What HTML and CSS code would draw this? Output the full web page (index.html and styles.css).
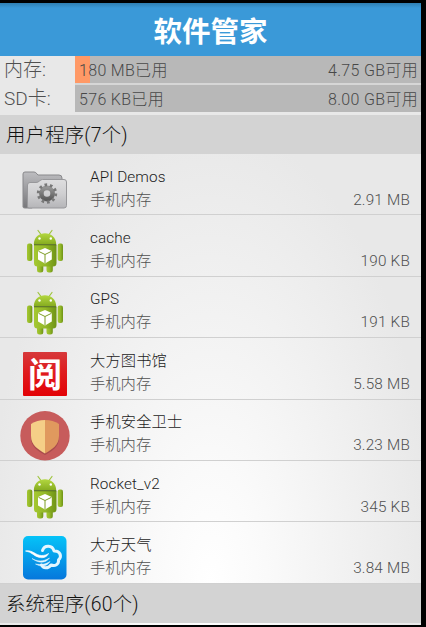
FILE: index.html
```html
<!DOCTYPE html>
<html lang="zh-CN">
<head>
<meta charset="utf-8">
<title>软件管家</title>
<link rel="stylesheet" href="styles.css">
</head>
<body>
<svg class="defs" width="0" height="0" aria-hidden="true">
  <defs>
    <linearGradient id="green" x1="0" x2="1"><stop offset="0" stop-color="#a5c832"/><stop offset=".5" stop-color="#93b828"/><stop offset="1" stop-color="#6f9316"/></linearGradient>
    <linearGradient id="head" x1="0" x2="0" y1="0" y2="1"><stop offset="0" stop-color="#b4d840"/><stop offset="1" stop-color="#86ac20"/></linearGradient>
    <symbol id="android" viewBox="0 0 50 50">
      <path d="M18 4.500l3 4M32 4.500l-3 4" stroke="#9dc43a" stroke-width="1.200" stroke-linecap="round"/>
      <path d="M13.800 18.200C14 3.500 36 3.500 36.200 18.200z" fill="url(#head)"/>
      <circle cx="19.500" cy="12.500" r="1.200" fill="#fff"/><circle cx="30.800" cy="12.500" r="1.200" fill="#fff"/>
      <rect x="7" y="17.500" width="5.300" height="17.500" rx="2" fill="url(#green)"/>
      <rect x="37.700" y="17.500" width="5.300" height="17.500" rx="2" fill="url(#green)"/>
      <rect x="17" y="35" width="6.300" height="11.500" rx="2.500" fill="url(#green)"/>
      <rect x="26.500" y="35" width="6.300" height="11.500" rx="2.500" fill="url(#green)"/>
      <path d="M14 19h22.500v18a3.500 3.500 0 0 1-3.500 3.500h-15.500a3.500 3.500 0 0 1-3.500-3.500z" fill="url(#green)"/>
      <path d="M14 18.700h22.300" stroke="#4f6b14" stroke-width="1.100"/>
      <path d="M18 25l7-3 6.800 3v8.500l-6.800 4-7-4z" fill="#fff"/>
      <path d="M18.500 25.300l6.500 3.200 6.500-3.200M25 28.500v8.500" fill="none" stroke="#7d9d25" stroke-width="1"/>
    </symbol>
  </defs>
</svg>
<main class="screen">
  <header class="title">软件管家</header>
  <section class="storage">
    <div class="label">内存:</div>
    <div class="bar memory"><span>180 MB已用</span><span>4.75 GB可用</span></div>
    <div class="label">SD卡:</div>
    <div class="bar"><span>576 KB已用</span><span>8.00 GB可用</span></div>
  </section>
  <h2 class="group">用户程序(7个)</h2>
  <ul class="apps">
    <li class="app">
      <svg class="icon" viewBox="0 0 50 50">
        <defs>
          <linearGradient id="back" x1="0" y1="0" x2="0" y2="1"><stop offset="0" stop-color="#bdbdc0"/><stop offset="1" stop-color="#77777a"/></linearGradient>
          <linearGradient id="front" x1="0" y1="0" x2="0" y2="1"><stop offset="0" stop-color="#dededf"/><stop offset=".5" stop-color="#cfcfd1"/><stop offset="1" stop-color="#b5b5b8"/></linearGradient>
          <linearGradient id="gear" x1="0" y1="0" x2="0" y2="1"><stop offset="0" stop-color="#959595"/><stop offset="1" stop-color="#5c5c5c"/></linearGradient>
        </defs>
        <path d="M3 42V9q0-2 2-2h9q2 0 3 2l1 1h21q3 0 3 3v4l-30 26H5q-2 0-2-1z" fill="url(#back)" stroke="#88888b"/>
        <path d="M7.500 41.500V20q0-2.500 2.500-2.500h6q2 0 3.500-1.500t3-1.500H44q2.500 0 2.500 2.500V40.500q0 2.500-2.500 2.500H9q-1.500 0-1.500-1.500z" fill="url(#front)" stroke="#98989b"/>
        <circle cx="27" cy="28.500" r="5.600" fill="none" stroke="url(#gear)" stroke-width="4.600"/>
        <circle cx="27" cy="28.500" r="8.700" fill="none" stroke="#787878" stroke-width="3" stroke-dasharray="2.600 2.866"/>
      </svg>
      <div class="info"><div class="name">API Demos</div><div class="meta"><span>手机内存</span><span>2.91 MB</span></div></div>
    </li>
    <li class="app">
      <svg class="icon"><use href="#android"/></svg>
      <div class="info"><div class="name">cache</div><div class="meta"><span>手机内存</span><span>190 KB</span></div></div>
    </li>
    <li class="app">
      <svg class="icon"><use href="#android"/></svg>
      <div class="info"><div class="name">GPS</div><div class="meta"><span>手机内存</span><span>191 KB</span></div></div>
    </li>
    <li class="app">
      <svg class="icon" viewBox="0 0 50 50">
        <defs><linearGradient id="red" x1="0" y1="0" x2="0" y2="1"><stop offset="0" stop-color="#d6383a"/><stop offset=".45" stop-color="#df1c1e"/><stop offset="1" stop-color="#e30206"/></linearGradient></defs>
        <rect x="3" y="3" width="44" height="44" rx="1" fill="url(#red)"/>
        <text class="glyph" x="25" y="37.500" text-anchor="middle">阅</text>
      </svg>
      <div class="info"><div class="name">大方图书馆</div><div class="meta"><span>手机内存</span><span>5.58 MB</span></div></div>
    </li>
    <li class="app">
      <svg class="icon" viewBox="0 0 50 50">
        <circle cx="25" cy="24.700" r="24.700" fill="#c75c5c"/>
        <path d="M25 11q8 0 14 4v12c0 9-7 13-14 17-7-4-14-8-14-17V15q6-4 14-4z" fill="#a94b4d"/>
        <path d="M25 9q-8 0-14 4v12c0 9 7 13.500 14 17.500z" fill="#f5cf87"/>
        <path d="M25 9q8 0 14 4v12c0 9-7 13.500-14 17.500z" fill="#e0995e"/>
      </svg>
      <div class="info"><div class="name">手机安全卫士</div><div class="meta"><span>手机内存</span><span>3.23 MB</span></div></div>
    </li>
    <li class="app">
      <svg class="icon"><use href="#android"/></svg>
      <div class="info"><div class="name">Rocket_v2</div><div class="meta"><span>手机内存</span><span>345 KB</span></div></div>
    </li>
    <li class="app">
      <svg class="icon" viewBox="0 0 50 50">
        <defs><linearGradient id="sky" x1="0" y1="0" x2="0" y2="1"><stop offset="0" stop-color="#05c3f8"/><stop offset="1" stop-color="#0677dc"/></linearGradient></defs>
        <rect x="3" y="3" width="43.500" height="43.500" rx="5" fill="url(#sky)"/>
        <path d="M22.500 17.500c2-6 10-5.500 11.500.5 6-.5 8.500 5.500 4.500 9 .5 4.500-3.500 6.500-7.500 5-3 4-8 3.500-9.500 0" fill="none" stroke="#e4f6ff" stroke-width="3" stroke-linecap="round" stroke-linejoin="round"/>
        <path d="M5.500 18c7-1.500 10 4.500 16 4.500 3 0 5-.5 7-2-1.500 3.500-5 4.500-8 4.100C14 24 12 18.500 5.500 18z" fill="#fff" stroke="#fff" stroke-width=".7"/>
        <path d="M12 25.500c5 3 11 3.500 17.500-.5-4 5.500-11 5.500-17.500.5zM15.500 31c5 1 10 .5 14.500-2.500-3.500 5.500-9 5.500-14.500 2.500z" fill="#e4f6ff" stroke="#e4f6ff" stroke-width=".5"/>
      </svg>
      <div class="info"><div class="name">大方天气</div><div class="meta"><span>手机内存</span><span>3.84 MB</span></div></div>
    </li>
  </ul>
  <h2 class="group">系统程序(60个)</h2>
</main>
</body>
</html>
```
FILE: styles.css
```css
* { box-sizing: border-box; }
body {
  margin: 0;
  height: 627px;
  padding: 3px 5px 2px 0;
  background: #000;
  overflow: hidden;
  font-family: Roboto, "Noto Sans CJK SC", sans-serif;
  font-weight: 300;
}
.defs { display: block; }
.screen {
  height: 622px;
  overflow: hidden;
  background: radial-gradient(ellipse 225px 460px at 50% 580px, #fff, #fafafa 25%, #e8e8e8);
}
.title {
  height: 53px;
  line-height: 54px;
  text-align: center;
  font-family: "Noto Sans CJK SC", sans-serif;
  font-size: 28.5px;
  font-weight: 700;
  color: #fff;
  background: linear-gradient(#2f7fb2, #3a99d8 5px);
}
.storage {
  display: grid;
  grid-template-columns: 75px 1fr;
  grid-template-rows: 27px 27px;
  row-gap: 2px;
  height: 59px;
  background: #e8e8e8;
}
.label {
  padding-left: 4px;
  line-height: 28px;
  font-size: 19px;
  color: #505050;
  white-space: nowrap;
}
.bar {
  display: flex;
  justify-content: space-between;
  padding: 0 3px 0 4px;
  line-height: 29px;
  font-size: 16px;
  letter-spacing: .32px;
  color: #484848;
  background: #b8b8b8;
  box-shadow: 0 2px #d6d6d6;
}
.bar:last-child { box-shadow: none; }
.memory { background: linear-gradient(90deg, #ff9966 15px, #b8b8b8 15px); }
.group {
  height: 39px;
  margin: 0;
  padding-left: 6px;
  line-height: 42px;
  font-size: 19.4px;
  font-weight: 300;
  letter-spacing: .2px;
  color: #111;
  background: #d3d3d3;
}
.apps { margin: 0; padding: 0; list-style: none; }
.app {
  display: flex;
  height: 61.4px;
  padding: 11px 11px 0 20px;
  border-bottom: 1px solid #d0d0d0;
}
.icon { flex: none; width: 50px; height: 50px; margin-right: 20px; }
.glyph { font: 700 34px/1 "Noto Sans CJK SC", sans-serif; fill: #fff; }
.info { flex: 1; padding-top: .6px; font-size: 15.3px; line-height: 23px; }
.name { color: #1c1c1c; letter-spacing: .1px; }
.meta { display: flex; justify-content: space-between; color: #505050; }
.meta span:last-child { letter-spacing: .2px; }
```
